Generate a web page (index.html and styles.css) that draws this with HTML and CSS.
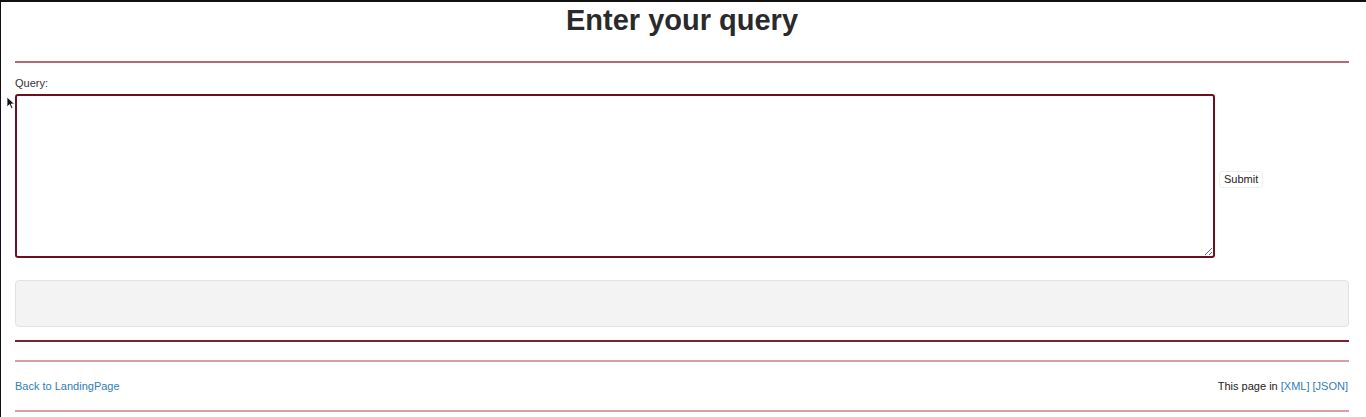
FILE: index.html
```html
<!DOCTYPE html>
<html>
<head>
<meta charset="utf-8">
<link rel="stylesheet" href="styles.css">
</head>
<body>
<div class="frame">
  <h1 class="title">Enter your query</h1>
  <div class="rule rule-top"></div>
  <form class="query-form">
    <label class="label" for="q">Query:</label>
    <div class="row">
      <textarea id="q" class="query"></textarea>
      <button type="button" class="submit">Submit</button>
    </div>
  </form>
  <div class="result"></div>
  <div class="rule rule-dark"></div>
  <div class="rule rule-light"></div>
  <div class="footer">
    <a class="link" href="#">Back to LandingPage</a>
    <span class="formats">This page in <a class="link" href="#">[XML]</a> <a class="link" href="#">[JSON]</a></span>
  </div>
  <div class="rule rule-light rule-bottom"></div>
  <svg class="cursor" width="10" height="14" viewBox="0 0 10 14"><path d="M1 1 L1 11 L3.5 8.6 L5.4 12.8 L7 12 L5.2 8 L8.6 8 Z" fill="#111" stroke="#fff" stroke-width="0.8"/></svg>
</div>
</body>
</html>
```
FILE: styles.css
```css
html, body {
  margin: 0;
  padding: 0;
  background: #fff;
}
.frame {
  position: relative;
  box-sizing: border-box;
  width: 1366px;
  height: 417px;
  border-top: 2px solid #111;
  border-left: 1px solid #111;
  padding: 0 17px 0 14px;
  font-family: "Liberation Sans", Arial, sans-serif;
  font-size: 11px;
  color: #222;
  overflow: hidden;
}
.title {
  margin: 0;
  height: 59px;
  padding-top: 1px;
  box-sizing: border-box;
  text-align: center;
  font-size: 29px;
  line-height: 34px;
  font-weight: bold;
  color: #2a2a2a;
}
.rule {
  height: 0;
}
.rule-top {
  border-top: 2px solid #b46a78;
}
.query-form {
  margin: 0;
  padding-top: 14px;
}
.label {
  display: block;
  line-height: 13px;
  height: 13px;
  color: #333;
}
.row {
  display: flex;
  align-items: center;
  margin-top: 4px;
}
.query {
  box-sizing: border-box;
  width: 1200px;
  height: 164px;
  margin: 0;
  border: 2px solid #6d0f22;
  border-radius: 3px;
  resize: vertical;
  padding: 2px;
}
.submit {
  margin: 7px 0 0 4px;
  font-family: "Liberation Sans", Arial, sans-serif;
  font-size: 11px;
  color: #222;
  background: #fff;
  border: 1px solid #efefef;
  border-radius: 3px;
  padding: 1px 4px;
  line-height: 13px;
}
.result {
  box-sizing: border-box;
  height: 47px;
  margin-top: 22px;
  background: #f3f3f3;
  border: 1px solid #e2e2e2;
  border-radius: 4px;
}
.rule-dark {
  margin-top: 13px;
  border-top: 2px solid #7e1f30;
}
.rule-light {
  margin-top: 18px;
  border-top: 2px solid #dc9ea3;
}
.footer {
  display: flex;
  justify-content: space-between;
  align-items: center;
  height: 13px;
  margin-top: 18px;
  line-height: 13px;
  padding-right: 1px;
}
.link {
  color: #2f7db5;
  text-decoration: none;
}
.formats {
  color: #222;
}
.rule-bottom {
  margin-top: 17px;
}
.cursor {
  position: absolute;
  left: 5px;
  top: 94px;
}
```
